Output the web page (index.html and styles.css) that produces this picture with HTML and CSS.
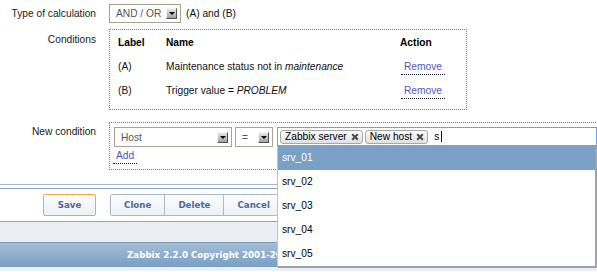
FILE: index.html
```html
<!DOCTYPE html>
<html>
<head>
<meta charset="utf-8">
<link rel="stylesheet" href="styles.css">
</head>
<body>
<div class="page">
  <div class="form">
    <div class="row row-calc">
      <div class="lbl">Type of calculation</div>
      <div class="val">
        <div class="select sel-calc"><span>AND / OR</span><span class="arrow"></span></div>
        <span class="calc-text">(A) and (B)</span>
      </div>
    </div>

    <div class="row row-cond">
      <div class="lbl lbl-cond">Conditions</div>
      <div class="box cond-box">
        <div class="cond-table">
          <div class="th">Label</div><div class="th">Name</div><div class="th">Action</div>
          <div>(A)</div><div>Maintenance status not in <i>maintenance</i></div><div><a class="link remove">Remove</a></div>
          <div>(B)</div><div>Trigger value = <i>PROBLEM</i></div><div><a class="link remove">Remove</a></div>
        </div>
      </div>
    </div>

    <div class="row row-new">
      <div class="lbl lbl-new">New condition</div>
      <div class="box new-box">
        <div class="new-controls">
          <div class="select sel-host"><span>Host</span><span class="arrow"></span></div>
          <div class="select sel-op"><span>=</span><span class="arrow"></span></div>
          <div class="multiselect">
            <span class="tag">Zabbix server<svg class="x" width="8" height="8" viewBox="0 0 8 8"><path d="M1.2 1.2L6.8 6.8M6.8 1.2L1.2 6.8" stroke="#4a4a4a" stroke-width="2" fill="none"/></svg></span>
            <span class="tag">New host<svg class="x" width="8" height="8" viewBox="0 0 8 8"><path d="M1.2 1.2L6.8 6.8M6.8 1.2L1.2 6.8" stroke="#4a4a4a" stroke-width="2" fill="none"/></svg></span>
            <span class="typed">s</span><span class="caret"></span>
            <ul class="suggest">
              <li class="active">srv_01</li>
              <li>srv_02</li>
              <li>srv_03</li>
              <li>srv_04</li>
              <li>srv_05</li>
            </ul>
          </div>
        </div>
        <div class="add-row"><a class="link add">Add</a></div>
      </div>
    </div>
  </div>

  <div class="form-footer">
    <div class="buttons">
      <button class="btn btn-save">Save</button>
      <div class="btn-group">
        <button class="btn">Clone</button>
        <button class="btn">Delete</button>
        <button class="btn">Cancel</button>
      </div>
    </div>
  </div>
  <div class="spacer"></div>
  <div class="footer">Zabbix 2.2.0 Copyright 2001-2013 by Zabbix SIA</div>
  <div class="bottom-strip"></div>
</div>
</body>
</html>
```

FILE: styles.css
```css
* { box-sizing: border-box; }
html, body { margin: 0; padding: 0; overflow: hidden; background: #fff; }
.page {
  width: 597px;
  height: 272px;
  overflow: hidden;
  font-family: "Liberation Sans", Arial, sans-serif;
  font-size: 10.2px;
  color: #111;
}
.form { padding-top: 4px; }
.row { display: flex; column-gap: 13px; align-items: flex-start; }
.lbl { width: 96px; flex: none; text-align: right; color: #1a1a1a; }
.row-calc .lbl { line-height: 19px; }
.row-cond { margin-top: 6px; }
.lbl-cond { padding-top: 5px; line-height: 12px; }
.row-new { margin-top: 12px; }
.lbl-new { padding-top: 4px; line-height: 12px; }
.val { display: flex; align-items: center; gap: 5px; }

.select {
  display: flex;
  align-items: center;
  justify-content: space-between;
  flex: none;
  height: 19px;
  border: 1px solid #a5a393;
  background: #fff;
  color: #555;
  padding: 0 3px 0 6px;
}
.sel-calc { width: 72px; }
.sel-host { width: 118px; height: 20px; }
.sel-op { width: 38px; height: 20px; margin-left: 3px; }
.arrow {
  position: relative;
  width: 11px;
  height: 11px;
  background: linear-gradient(#e6e6e6, #a2a2a2);
  border: 1px solid;
  border-color: #f4f4f4 #505050 #505050 #f4f4f4;
}
.arrow::after {
  content: "";
  position: absolute;
  left: 1.5px;
  top: 3px;
  border-left: 3px solid transparent;
  border-right: 3px solid transparent;
  border-top: 3.5px solid #000;
}

.box { border: 1px dotted #6d7bb4; }
.cond-box { width: 358px; padding: 1px 8px 6px 8px; }
.cond-table {
  display: grid;
  grid-template-columns: 48px 234px auto;
  grid-auto-rows: 24px;
  line-height: 24px;
}
.th { font-weight: bold; color: #000; }
.link {
  color: #4e59b6;
  border-bottom: 1px dotted #1a1a40;
  padding: 0 3px 2px 3px;
  cursor: pointer;
}
.remove { margin-left: 1px; }

.new-box { flex: none; padding: 4px 6px 6px 4px; }
.new-controls { display: flex; align-items: flex-start; }
.multiselect {
  position: relative;
  display: flex;
  align-items: center;
  flex: none;
  width: 320px;
  height: 19px;
  margin-left: 4px;
  border: 1px solid #6aa0ee;
  padding: 0 2px;
  gap: 2px;
  background: #fff;
}
.tag {
  display: flex;
  align-items: center;
  gap: 4px;
  height: 14px;
  line-height: 12px;
  border: 1px solid #a7a7a7;
  border-radius: 3px;
  background: linear-gradient(#fbfbfb, #e1e1e1);
  padding: 0 3px 0 4px;
  color: #000;
  white-space: nowrap;
}
.x { display: block; }
.typed { margin-left: 4px; color: #000; }
.caret { width: 1px; height: 11px; background: #000; }
.suggest {
  position: absolute;
  top: calc(100% + 1px);
  left: -1px;
  width: 320px;
  margin: 0;
  padding: 0;
  list-style: none;
  background: #fff;
  border-left: 1px solid #c4c4c4;
  border-right: 2px solid #a2a2a2;
  border-bottom: 2px solid #a2a2a2;
}
.suggest li {
  height: 24px;
  line-height: 24px;
  padding-left: 4px;
  color: #000;
}
.suggest li.active { background: #7ba0c6; color: #fff; }

.add-row { margin-top: 2px; line-height: 14px; }
.add { margin-left: -1px; }

.form-footer { margin-top: 14px; border-top: 1px solid #a5b6ca; padding-top: 3px; }
.buttons {
  display: flex;
  align-items: center;
  border-top: 1px solid #8ea5c1;
  border-bottom: 1px solid #8ea5c1;
  padding: 5px 0 5px 43px;
}
.btn {
  height: 22px;
  margin: 0;
  padding: 0 13px;
  font-family: "DejaVu Sans", sans-serif;
  font-weight: bold;
  font-size: 8.7px;
  color: #4b6994;
  background: linear-gradient(#fbfcfd, #edf1f5);
  border: none;
}
.btn-save { border: 1px solid #f6a544; border-radius: 2px; width: 53px; }
.btn-group {
  display: flex;
  margin-left: 14px;
  border: 1px solid #a8b9cf;
  border-radius: 2px;
}
.btn-group .btn { height: 20px; }
.btn-group .btn + .btn { border-left: 1px solid #a8b9cf; }

.spacer { height: 20px; background: #ebeef2; }
.footer {
  height: 25px;
  border-top: 1px solid #7c99bb;
  background: linear-gradient(#a6bdd5, #789fc4);
  color: #fff;
  font-family: "DejaVu Sans", sans-serif;
  font-weight: bold;
  font-size: 8.7px;
  line-height: 24px;
  padding-left: 127px;
  white-space: nowrap;
}
.bottom-strip { height: 4px; background: #ebeef2; }
```
